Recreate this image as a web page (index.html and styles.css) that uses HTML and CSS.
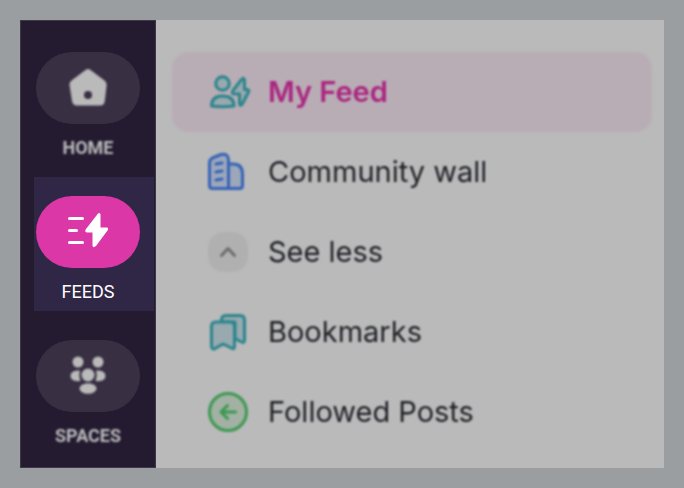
FILE: index.html
```html
<!DOCTYPE html>
<html lang="en">
<head>
<meta charset="utf-8">
<meta name="viewport" content="width=device-width, initial-scale=1">
<title>Feeds</title>
<link rel="stylesheet" href="styles.css">
</head>
<body>
<div class="app">
  <nav class="rail">
    <a class="rail-item dimmed" href="#home">
      <span class="pill">
        <svg width="40" height="40" viewBox="0 0 40 40"><path fill="currentColor" fill-rule="evenodd" d="M17.500 2Q20 0 22.500 2L36.500 12.500Q39 14.500 38.600 17.500L36.800 33Q36.200 37.500 32 37.500H9Q4.800 37.500 4 33L1.600 17.500Q1 14.500 3.500 12.500ZM20 23a4 4 0 1 0 0 8a4 4 0 1 0 0-8Z"/></svg>
      </span>
      <span class="rail-label">HOME</span>
    </a>
    <a class="rail-item current" href="#feeds" aria-current="page">
      <span class="pill">
        <svg width="40" height="40" viewBox="0 0 40 40"><path d="M1.500 6.500h13M1.500 18.500h7M1.500 30.500h13" fill="none" stroke="currentColor" stroke-width="3" stroke-linecap="round"/><path d="M30 1.500Q32 0 32.500 2.500V15.500H38.500Q41.500 16 39.500 18.500L28 34Q25 36.500 24.500 33.500V20.500H19Q16 20 18 17Z" fill="currentColor"/></svg>
      </span>
      <span class="rail-label">FEEDS</span>
    </a>
    <a class="rail-item dimmed" href="#spaces">
      <span class="pill">
        <svg width="40" height="40" viewBox="0 0 40 40" fill="currentColor"><circle cx="10" cy="6" r="5.500"/><circle cx="30" cy="6" r="5.500"/><circle cx="20" cy="19" r="6.500"/><ellipse cx="20" cy="32.500" rx="8.500" ry="5.200"/><path d="M12 14.500Q10.500 19.500 12.500 25Q2.500 26 2.500 20Q2.500 14 12 14.500ZM28 14.500Q29.500 19.500 27.500 25Q37.500 26 37.500 20Q37.500 14 28 14.500Z"/></svg>
      </span>
      <span class="rail-label">SPACES</span>
    </a>
  </nav>
  <main class="panel">
    <ul class="menu">
      <li><a class="menu-item selected" href="#my-feed"><span class="icon teal"><svg width="40" height="40" viewBox="0 0 40 40"><circle cx="14.500" cy="11.500" r="6.800"/><path d="M3.500 34Q3.500 24 14.500 24Q26 24 26 34Q14.500 35.500 3.500 34Z"/><path d="M33.500 7.500Q36 5 36.500 8V17.500H39.500Q41.500 18 40.500 20L34 32.500Q32 34.500 31.500 31.500V22H26Q23 21.500 25 18.500Z"/></svg></span>My Feed</a></li>
      <li><a class="menu-item" href="#wall"><span class="icon blue"><svg width="40" height="40" viewBox="0 0 40 40"><path d="M20.500 12H25Q34.500 12 34.500 22V33.500Q34.500 36.500 31.500 36.500H20.500Z"/><path d="M1.500 11Q1.500 7 5.500 5.500L13 2.500Q20.500 1 20.500 8V36.500H4.500Q1.500 36.500 1.500 33.500Z"/><path d="M8 12l6-1M8 20l6-1M8 28l6-1"/></svg></span>Community wall</a></li>
      <li><button class="menu-item" type="button"><span class="icon toggle"><svg width="40" height="40" viewBox="0 0 40 40"><path d="M13.500 23.500l6.500-7l6.500 7"/></svg></span>See less</button></li>
      <li><a class="menu-item" href="#bookmarks"><span class="icon teal"><svg width="40" height="40" viewBox="0 0 40 40"><path d="M13.500 10V8Q13.500 3.500 18 3.500H32Q36.500 3.500 36.500 8V28Q36.500 31.500 33.500 30L27 26.500V10Z"/><path d="M3.500 14.500Q3.500 10 8 10H22Q26.500 10 26.500 14.500V34Q26.500 38 23.500 36L15 32L7 36.500Q3.500 38 3.500 34Z"/></svg></span>Bookmarks</a></li>
      <li><a class="menu-item" href="#followed"><span class="icon green"><svg width="40" height="40" viewBox="0 0 40 40"><circle cx="20" cy="20" r="18.500"/><path d="M27.500 20H13M19.500 13.500L13 20l6.500 6.500" fill="none"/></svg></span>Followed Posts</a></li>
    </ul>
  </main>
</div>
</body>
</html>
```
FILE: styles.css
```css
* { box-sizing: border-box; }

body {
  margin: 0;
  background: #9a9ea0;
  color: #1f2026;
  font-family: Inter, "Liberation Sans", sans-serif;
}

.app {
  display: flex;
  min-height: 100vh;
  padding: 20px;
}

.rail {
  flex: none;
  width: 136px;
  padding: 12px 1px 12px 13px;
  background: #241b31;
  border: 1px solid #3d3845;
}

.rail-item {
  display: flex;
  flex-direction: column;
  align-items: center;
  gap: 12px;
  padding: 19px 14px 7px 2px;
  margin-bottom: 10px;
  color: #bababa;
  font: 700 18px/24px Roboto, "Liberation Sans", sans-serif;
  text-decoration: none;
}

.rail-item:last-child { margin-bottom: 0; }

.current {
  background: #302746;
  color: #fff;
  font-weight: 400;
}

.pill {
  display: grid;
  place-items: center;
  width: 104px;
  height: 72px;
  border-radius: 36px;
  background: #382f42;
}

.current .pill { background: #dc37a7; }

.dimmed svg,
.dimmed .rail-label,
.menu {
  filter: blur(1px);
}

.panel {
  flex: 1;
  min-width: 0;
  padding: 32px 12px 16px 16px;
  background: #bababa;
}

.menu {
  margin: 0;
  padding: 0;
  list-style: none;
}

.menu-item {
  display: flex;
  align-items: center;
  gap: 20px;
  width: 100%;
  height: 80px;
  padding: 0 36px;
  border: 0;
  border-radius: 16px;
  background: none;
  color: inherit;
  font: 400 29px/40px Inter, "Liberation Sans", sans-serif;
  text-align: left;
  text-decoration: none;
}

.selected {
  background: #b9adb5;
  color: #aa2580;
  font-weight: 600;
}

.icon {
  display: flex;
  flex: none;
  fill: none;
  stroke: currentColor;
  stroke-width: 3;
  stroke-linecap: round;
  stroke-linejoin: round;
}

.icon svg { overflow: visible; }
.teal { color: #2b858c; fill: #98a9af; }
.blue { color: #3563b8; fill: #9da7ba; }
.green { color: #3d9852; fill: #a2b1a3; }
.toggle { border-radius: 16px; background: #b0b0b0; color: #6c6c6c; }
```
